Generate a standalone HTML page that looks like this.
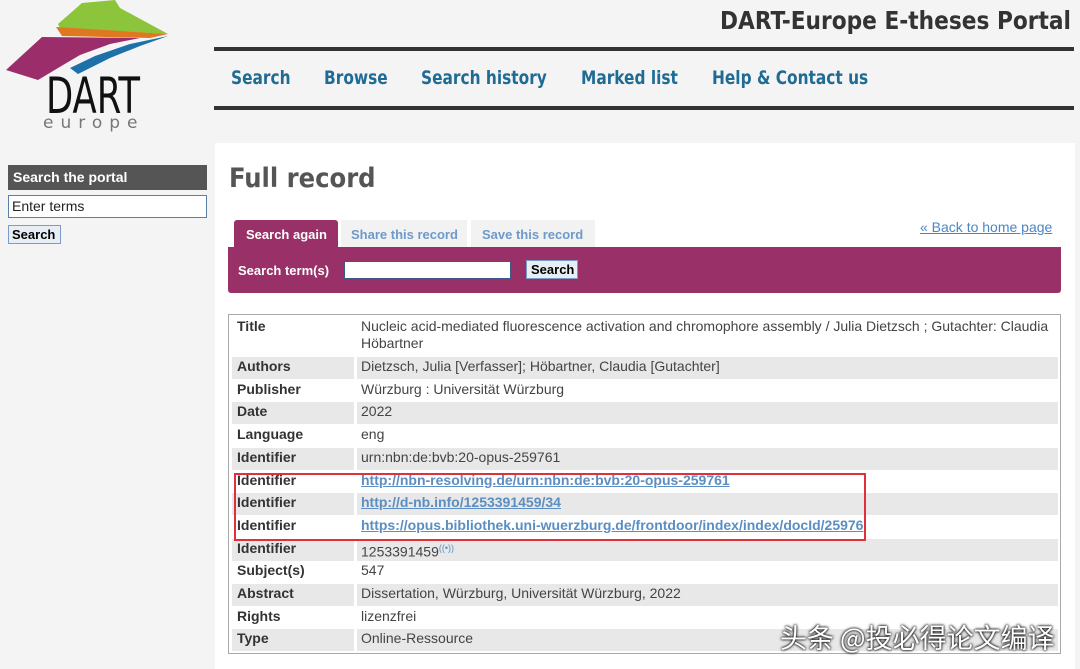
<!DOCTYPE html>
<html><head><meta charset="utf-8"><style>
*{margin:0;padding:0;box-sizing:border-box}
body{width:1080px;height:669px;background:#f4f4f4;font-family:"Liberation Sans",Arial,sans-serif;position:relative;overflow:hidden}
.a{position:absolute;white-space:nowrap}
.nav a{position:absolute;top:67px;color:#1f6b94;font-family:"DejaVu Sans Condensed","DejaVu Sans",sans-serif;font-size:19px;text-decoration:none;font-weight:bold;white-space:nowrap;transform-origin:0 0;transform:scaleX(0.9)}
.row{position:absolute;left:232px;width:826px;height:22px;font-size:14px;color:#444}
.row .l{position:absolute;left:0;top:0;width:122px;height:100%;padding:1px 0 0 5px;font-weight:bold;color:#333}
.row .v{position:absolute;left:125px;top:0;right:0;height:100%;padding:1px 0 0 4px;line-height:17px}
.g .l,.g .v{background:#e8e8e8}
.row a{color:#5b8ec2;font-weight:bold;text-decoration:underline}
</style></head><body>
<svg class="a" style="left:0;top:0" width="180" height="135" viewBox="0 0 180 135">
<polygon points="58,24 82,3 115,0 120,8 168,34 60,28" fill="#8cc43c"/>
<polygon points="56,27 168,34 150,38 62,36" fill="#e07820"/>
<polygon points="42,37 140,38 110,44 80,55 58,68 38,80 6,70" fill="#9a2d6a"/>
<polygon points="168,36 130,44 95,56 70,68 78,74 110,58 140,46" fill="#1e70a8"/>
<text x="46" y="113" font-family="DejaVu Sans Condensed,sans-serif" font-size="50" fill="#111" textLength="94" lengthAdjust="spacingAndGlyphs" font-weight="200">DART</text>
<text x="43" y="128" font-family="DejaVu Sans,sans-serif" font-size="17" fill="#777" letter-spacing="7">europe</text>
</svg>
<div class="a" style="left:720px;top:6px;font-family:'DejaVu Sans Condensed','DejaVu Sans',sans-serif;font-size:25px;color:#333;font-weight:bold;transform-origin:0 0;transform:scaleX(0.965)">DART-Europe E-theses Portal</div>
<div class="a" style="left:214px;top:47px;width:860px;height:4px;background:#333"></div>
<div class="a" style="left:214px;top:106px;width:860px;height:4px;background:#333"></div>
<div class="nav"><a style="left:231px">Search</a><a style="left:324px">Browse</a><a style="left:421px">Search history</a><a style="left:581px">Marked list</a><a style="left:712px">Help &amp; Contact us</a></div>
<div class="a" style="left:8px;top:165px;width:199px;height:25px;background:#555;color:#fff;font-weight:bold;font-size:14px;padding:4px 5px">Search the portal</div>
<div class="a" style="left:8px;top:195px;width:199px;height:23px;background:#fff;border:1px solid #5a7fa8;font-size:14px;padding:2px 3px;color:#222">Enter terms</div>
<div class="a" style="left:8px;top:225px;width:53px;height:19px;background:#e8eef6;border:1px solid #7a9cc8;font-size:13px;font-weight:bold;padding:1px 3px">Search</div>
<div class="a" style="left:215px;top:143px;width:860px;height:526px;background:#fff"></div>
<div class="a" style="left:229px;top:163px;font-family:'DejaVu Sans Condensed','DejaVu Sans',sans-serif;font-size:27px;color:#555;font-weight:bold">Full record</div>
<div class="a" style="left:234px;top:220px;width:104px;height:28px;background:#9a3068;border-radius:3px 3px 0 0;color:#fff;font-weight:bold;font-size:13px;padding:7px 12px">Search again</div>
<div class="a" style="left:341px;top:220px;width:126px;height:27px;background:#f2f2f2;color:#6d9acb;font-weight:bold;font-size:13px;padding:7px 10px">Share this record</div>
<div class="a" style="left:471px;top:220px;width:124px;height:27px;background:#f2f2f2;color:#6d9acb;font-weight:bold;font-size:13px;padding:7px 11px">Save this record</div>
<div class="a" style="left:920px;top:219px;color:#4a86c5;font-size:14px;text-decoration:underline">« Back to home page</div>
<div class="a" style="left:228px;top:247px;width:833px;height:46px;background:#9a3068;border-radius:0 0 3px 3px"></div>
<div class="a" style="left:238px;top:263px;color:#fff;font-weight:bold;font-size:13px">Search term(s)</div>
<div class="a" style="left:344px;top:261px;width:167px;height:18px;background:#fff;border:1px solid #3a5a88"></div>
<div class="a" style="left:526px;top:260px;width:52px;height:19px;background:#e8eef6;border:1px solid #7a9cc8;font-size:13px;font-weight:bold;padding:1px 4px">Search</div>
<div class="a" style="left:228px;top:314px;width:833px;height:340px;border:1px solid #aaa"></div>
<div class="row" style="top:317px;height:39px"><div class="l">Title</div><div class="v">Nucleic acid-mediated fluorescence activation and chromophore assembly / Julia Dietzsch ; Gutachter: Claudia Höbartner</div></div>
<div class="row g" style="top:357px"><div class="l">Authors</div><div class="v">Dietzsch, Julia [Verfasser]; Höbartner, Claudia [Gutachter]</div></div>
<div class="row" style="top:379.7px"><div class="l">Publisher</div><div class="v">Würzburg : Universität Würzburg</div></div>
<div class="row g" style="top:402.4px"><div class="l">Date</div><div class="v">2022</div></div>
<div class="row" style="top:425.1px"><div class="l">Language</div><div class="v">eng</div></div>
<div class="row g" style="top:447.8px"><div class="l">Identifier</div><div class="v">urn:nbn:de:bvb:20-opus-259761</div></div>
<div class="row" style="top:470.5px"><div class="l">Identifier</div><div class="v"><a>http://nbn-resolving.de/urn:nbn:de:bvb:20-opus-259761</a></div></div>
<div class="row g" style="top:493.2px"><div class="l">Identifier</div><div class="v"><a>http://d-nb.info/1253391459/34</a></div></div>
<div class="row" style="top:515.9px"><div class="l">Identifier</div><div class="v"><a>https://opus.bibliothek.uni-wuerzburg.de/frontdoor/index/index/docId/25976</a></div></div>
<div class="row g" style="top:538.6px"><div class="l">Identifier</div><div class="v">1253391459<sup style="font-size:9px;color:#5b8ec2">((•))</sup></div></div>
<div class="row" style="top:561.3px"><div class="l">Subject(s)</div><div class="v">547</div></div>
<div class="row g" style="top:584px"><div class="l">Abstract</div><div class="v">Dissertation, Würzburg, Universität Würzburg, 2022</div></div>
<div class="row" style="top:606.7px"><div class="l">Rights</div><div class="v">lizenzfrei</div></div>
<div class="row g" style="top:629.4px"><div class="l">Type</div><div class="v">Online-Ressource</div></div>
<div class="a" style="left:234px;top:473px;width:632px;height:68px;border:2px solid #e0303a"></div>
<div class="a" style="left:780px;top:617px;font-family:'Noto Sans CJK SC',sans-serif;font-size:27px;color:#fff;text-shadow:0 0 3px #000,0 0 2px #000">头条 @投必得论文编译</div>
</body></html>
